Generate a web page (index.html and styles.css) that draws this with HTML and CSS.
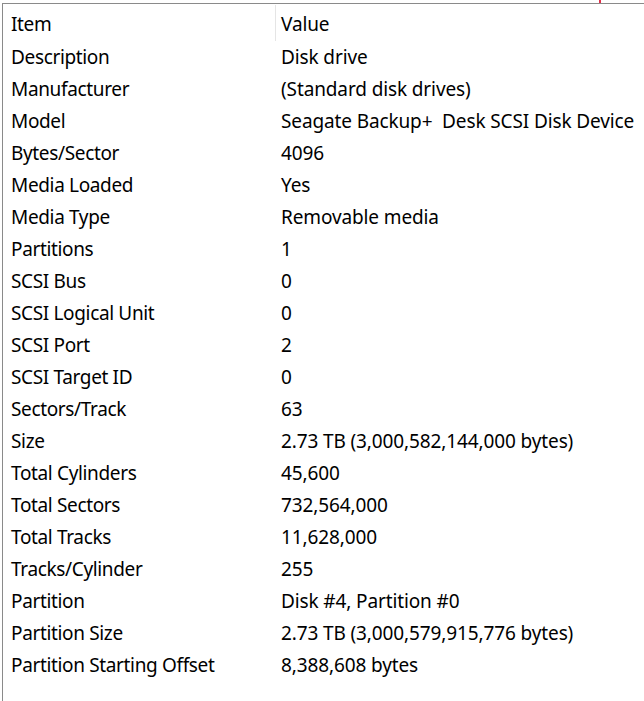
FILE: index.html
```html
<!DOCTYPE html>
<html>
<head>
<meta charset="utf-8">
<link rel="stylesheet" href="styles.css">
</head>
<body>
<div class="marker"></div>
<div class="list">
  <div class="head">
    <div class="col-item">Item</div>
    <div class="col-value">Value</div>
  </div>
  <div class="row"><div class="k">Description</div><div class="v">Disk drive</div></div>
  <div class="row"><div class="k">Manufacturer</div><div class="v">(Standard disk drives)</div></div>
  <div class="row"><div class="k">Model</div><div class="v">Seagate Backup+&nbsp; Desk SCSI Disk Device</div></div>
  <div class="row"><div class="k">Bytes/Sector</div><div class="v">4096</div></div>
  <div class="row"><div class="k">Media Loaded</div><div class="v">Yes</div></div>
  <div class="row"><div class="k">Media Type</div><div class="v">Removable media</div></div>
  <div class="row"><div class="k">Partitions</div><div class="v">1</div></div>
  <div class="row"><div class="k">SCSI Bus</div><div class="v">0</div></div>
  <div class="row"><div class="k">SCSI Logical Unit</div><div class="v">0</div></div>
  <div class="row"><div class="k">SCSI Port</div><div class="v">2</div></div>
  <div class="row"><div class="k">SCSI Target ID</div><div class="v">0</div></div>
  <div class="row"><div class="k">Sectors/Track</div><div class="v">63</div></div>
  <div class="row"><div class="k">Size</div><div class="v">2.73 TB (3,000,582,144,000 bytes)</div></div>
  <div class="row"><div class="k">Total Cylinders</div><div class="v">45,600</div></div>
  <div class="row"><div class="k">Total Sectors</div><div class="v">732,564,000</div></div>
  <div class="row"><div class="k">Total Tracks</div><div class="v">11,628,000</div></div>
  <div class="row"><div class="k">Tracks/Cylinder</div><div class="v">255</div></div>
  <div class="row"><div class="k">Partition</div><div class="v">Disk #4, Partition #0</div></div>
  <div class="row"><div class="k">Partition Size</div><div class="v">2.73 TB (3,000,579,915,776 bytes)</div></div>
  <div class="row"><div class="k">Partition Starting Offset</div><div class="v">8,388,608 bytes</div></div>
</div>
</body>
</html>
```
FILE: styles.css
```css
html, body {
  margin: 0;
  padding: 0;
  background: #ffffff;
  height: 100%;
  overflow: hidden;
}
body {
  font-family: "Noto Sans", "Open Sans", sans-serif;
  font-size: 19px;
  color: #000000;
  position: relative;
}
.marker {
  position: absolute;
  left: 599px;
  top: 0;
  width: 2px;
  height: 3px;
  background: #e0304a;
}
.list {
  margin: 3px 0 0 2px;
  border-top: 1px solid #8a8a8a;
  border-left: 1px solid #8a8a8a;
  height: 700px;
}
.head {
  display: flex;
  height: 37px;
  align-items: center;
}
.col-item {
  width: 264px;
  padding-left: 8px;
  border-right: 1px solid #e5e5e5;
  height: 36px;
  line-height: 38px;
  letter-spacing: -0.35px;
}
.col-value {
  padding-left: 5px;
  line-height: 38px;
  height: 36px;
  letter-spacing: -0.12px;
}
.row {
  display: flex;
  height: 32px;
  line-height: 32px;
}
.k {
  width: 264px;
  padding-left: 8px;
  padding-right: 1px;
  white-space: nowrap;
  letter-spacing: -0.35px;
}
.v {
  padding-left: 5px;
  white-space: nowrap;
  letter-spacing: -0.12px;
}
```
